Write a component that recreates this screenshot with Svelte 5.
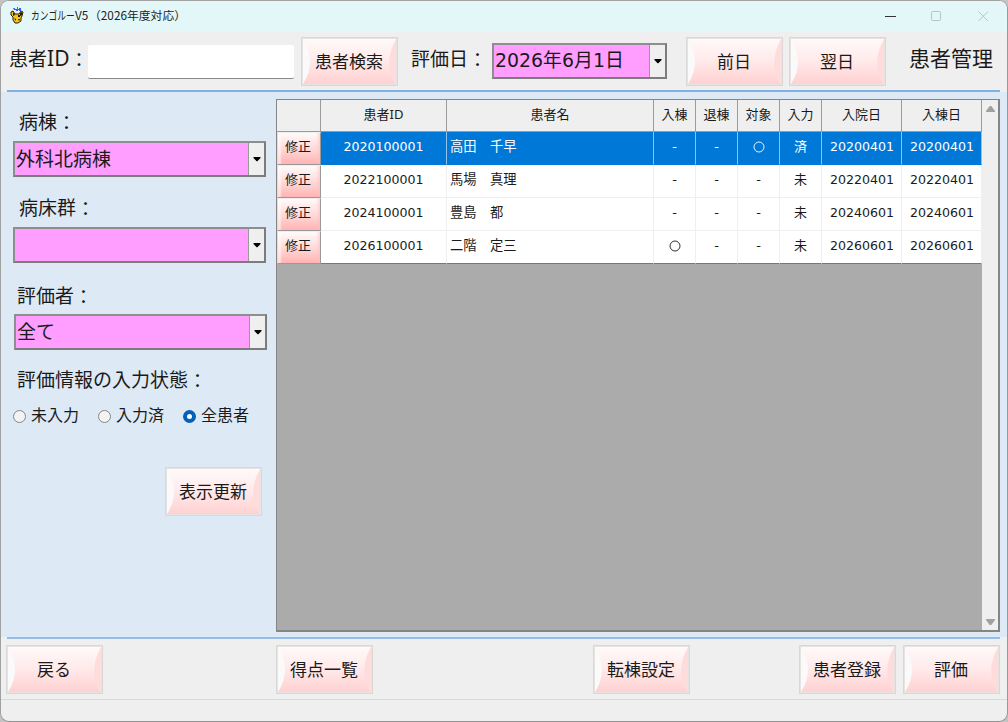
<script>
  const patients = [
    { id: '2020100001', name: '高田　千早', marks: ['-', '-', '○', '済'], admitted: '20200401', ward: '20200401' },
    { id: '2022100001', name: '馬場　真理', marks: ['-', '-', '-', '未'], admitted: '20220401', ward: '20220401' },
    { id: '2024100001', name: '豊島　都', marks: ['-', '-', '-', '未'], admitted: '20240601', ward: '20240601' },
    { id: '2026100001', name: '二階　定三', marks: ['○', '-', '-', '未'], admitted: '20260601', ward: '20260601' }
  ];
  const heads = ['患者名', '入棟', '退棟', '対象', '入力', '入院日', '入棟日'];
  const states = ['未入力', '入力済', '全患者'];
  let status = $state('全患者');
  let selected = $state(0);
</script>

{#snippet button(label)}
  <button class="glass">
    <svg viewBox="0 0 97 49" aria-hidden="true">
      <path d="M2 2Q16 25 2 47Z" fill="#fafafa" />
      <path d="M95 2Q82 25 94 47H95Z" fill="#ffdcdc" />
    </svg>
    <span>{label}</span>
  </button>
{/snippet}

{#snippet combo(value, kind)}
  <div class="combo {kind}">
    <span class="value">{value}</span>
    <span class="drop"><svg width="8" height="5" viewBox="0 0 8 5"><path d="M.5 0H7.5V1L4.4 4.3H3.6L.5 1Z" /></svg></span>
  </div>
{/snippet}

{#snippet colon()}<span class="colon">：</span>{/snippet}

<main>
  <header class="titlebar">
    <svg class="logo" width="14" height="17" viewBox="0 0 14 17">
      <path d="M1 5L3 4L5 7H9L11 4L13 5L12 9L11 11V14L8 16H5L3 13V10L1 8Z" fill="#f7c51e" stroke="#26200d" stroke-width="1" />
      <path d="M3 1H5V2H7V0H8V2H9V1H11V4H9V3H8V4H6V3H4Z" fill="#345dff" />
      <path d="M3 5L5 8L3 9ZM10 6L12 5V8L10 9ZM4 11L6 12V14ZM8 8H10V10H8ZM8 12H10L9 14Z" fill="#171812" />
    </svg>
    <span class="caption"><b class="kana"><b>カンゴルー</b></b><b class="ver">V5</b><b class="year">（2026年度対応）</b></span>
    <svg class="controls" width="106" height="16" viewBox="0 0 106 16">
      <path d="M1 8.5H12" stroke="#333" />
      <rect x="47.5" y="3.5" width="9" height="9" rx="1" fill="none" stroke="#b4c6c7" />
      <path d="M94.5 3.5L104 13M104 3.5L94.5 13" stroke="#b4c6c7" />
    </svg>
  </header>

  <section class="toolbar">
    <label class="pid" for="pid">患者<span class="latin">ID</span>{@render colon()}</label>
    <input id="pid" type="text" />
    {@render button('患者検索')}
    <span class="date-label">評価日{@render colon()}</span>
    {@render combo('2026年6月1日', 'date')}
    <div class="days">
      {@render button('前日')}
      {@render button('翌日')}
    </div>
    <h1>患者管理</h1>
  </section>

  <section class="body">
    <aside>
      <div class="label ward">病棟{@render colon()}</div>
      {@render combo('外科北病棟', '')}
      <div class="label beds">病床群{@render colon()}</div>
      {@render combo('', '')}
      <div class="label rater">評価者{@render colon()}</div>
      {@render combo('全て', 'shifted')}
      <div class="label state">評価情報の入力状態{@render colon()}</div>
      <div class="radios">
        {#each states as s}
          <label><input type="radio" name="state" value={s} bind:group={status} />{s}</label>
        {/each}
      </div>
      <div class="refresh">{@render button('表示更新')}</div>
    </aside>

    <div class="grid">
      <div class="rows">
        <div class="row head">
          <span></span>
          <span>患者<i class="latin">ID</i></span>
          {#each heads as h}<span>{h}</span>{/each}
        </div>
        {#each patients as p, i}
          <div class="row" class:selected={selected === i}>
            <button class="edit" onclick={() => (selected = i)}>修正</button>
            <span class="num">{p.id}</span>
            <span class="name">{p.name}</span>
            {#each p.marks as m}
              <span>{#if m === '○'}<svg width="12" height="12" viewBox="0 0 12 12" role="img" aria-label="○"><circle cx="6" cy="6" r="5" fill="none" stroke="currentColor" stroke-width=".9" /></svg>{:else}{m}{/if}</span>
            {/each}
            <span class="num date">{p.admitted}</span>
            <span class="num date">{p.ward}</span>
          </div>
        {/each}
      </div>
      <div class="scroll">
        <svg width="9" height="6" viewBox="0 0 9 6"><path d="M3.7 0H5.3L9 5V6H0V5Z" /></svg>
        <svg width="9" height="6" viewBox="0 0 9 6"><path d="M3.7 6H5.3L9 1V0H0V1Z" /></svg>
      </div>
    </div>
  </section>

  <footer>
    {@render button('戻る')}
    {@render button('得点一覧')}
    {@render button('転棟設定')}
    {@render button('患者登録')}
    {@render button('評価')}
  </footer>
  <div class="statusbar"></div>
</main>

<style>
  :global(body) { background: #c3c3c3; }
  * { box-sizing: border-box; }
  main {
    width: 1008px; height: 722px; overflow: hidden;
    display: flex; flex-direction: column;
    border: 1px solid #a0a2a2; border-right-color: #999; border-bottom-color: #929292;
    border-radius: 9px; background: #efefef; color: #1a1a1a;
    font-family: "DejaVu Sans", "Noto Sans CJK JP", sans-serif;
    font-size: 19px; line-height: 28px; white-space: nowrap;
  }
  .latin { font-family: "Noto Sans", sans-serif; font-style: normal; }
  .colon { display: inline-block; transform: translateY(1px); }
  .titlebar { flex: none; height: 31px; background: #e4f7f8; display: flex; align-items: center; padding: 0 17px 0 9px; }
  .logo { margin-top: -2px; }
  .caption { margin-left: 7px; margin-top: -3px; font: 11.8px/18px "Noto Sans CJK JP", sans-serif; display: flex; color: #222; }
  .caption b { font-weight: 400; }
  .kana { width: 44px; }
  .kana b { display: inline-block; transform: scaleX(.74); transform-origin: 0 50%; }
  .ver { width: 14px; }
  .controls { margin-left: auto; margin-top: -1px; }

  .toolbar { flex: none; height: 60px; display: flex; align-items: flex-start; margin: 0 7px 0 6px; padding-top: 5px; border-bottom: 2px solid #82b1e0; }
  .pid { width: 81px; padding-left: 2px; margin-top: 8px; }
  .pid .latin { font-size: 21px; line-height: 20px; }
  #pid { width: 206px; height: 34px; margin: 8px 7px 0 0; padding: 0 4px; border: 0; border-bottom: 1px solid #888; background: #fff; border-radius: 2px; font: inherit; outline: 0; }
  .date-label { margin: 8px 0 0 13px; width: 81px; }
  .days { display: flex; gap: 6px; margin-left: 19px; }
  h1 { margin: 7px 0 0 23px; font-weight: 400; font-size: 21px; line-height: 30px; }

  .glass {
    position: relative; flex: none; display: block; width: 97px; height: 49px; padding: 0 1px 2px 0;
    border: 1px solid #d8d8d8; outline: 1px solid #e8e3e3; outline-offset: -2px;
    background: linear-gradient(#fffafa, #ffeaea 48%, #ffd0d0);
    font: 17px/26px "Noto Sans CJK JP", sans-serif; color: #1a1a1a; white-space: nowrap;
  }
  .glass svg { position: absolute; inset: -1px; width: 97px; height: 49px; }
  .glass span { position: relative; }

  .combo { width: 253px; height: 36px; display: flex; border: 2px solid #8a8a8a; border-color: #8e8e8e #7c7c7c #7c7c7c #8e8e8e; background: #ff9eff; }
  .combo .value { flex: 1; padding-left: 1px; font-size: 19px; line-height: 32px; }
  .drop { width: 16px; background: #efefef; border-left: 1px solid #999; display: flex; align-items: center; justify-content: center; }
  .combo.date { width: 175px; margin-top: 6px; }
  .combo.date .value { font-size: 18.9px; line-height: 31px; }
  .shifted { margin-left: 1px; }

  .body { flex: none; height: 545px; display: flex; background: #dde9f5; }
  aside { width: 275px; padding-left: 12px; }
  .label { line-height: 28px; }
  .ward { padding-left: 6px; margin: 16px 0 5px; }
  .beds { padding-left: 6px; margin: 17px 0 5px; }
  .rater { padding-left: 4px; margin: 19px 0 4px; }
  .state { padding-left: 4px; margin-top: 16px; }
  .radios { display: flex; margin-top: 8px; font-size: 16px; line-height: 27px; height: 26px; }
  .radios label { display: flex; width: 85px; flex: none; }
  .radios input { appearance: none; width: 13px; height: 13px; margin: 8px 5px 0 0; border: 1px solid #858585; border-radius: 50%; background: #f3f3f3; }
  .radios input:checked { border: 4px solid #0560b8; background: #fff; }
  .refresh { margin: 39px 0 0 152px; }

  .grid { width: 724px; height: 533px; margin-top: 7px; display: flex; border: 1px solid #858585; border-right-width: 2px; border-bottom-width: 2px; background: #ababab; }
  .rows { width: 705px; }
  .row { display: grid; grid-template-columns: 44px 126px 207px 42px 42px 42px 42px 80px 80px; grid-template-rows: 100%; height: 33px; background: #fff; font-size: 13px; line-height: 29px; text-align: center; }
  .row > span { border-right: 1px solid #efefef; border-bottom: 1px solid #efefef; display: flex; justify-content: center; }
  .row svg { margin-top: 9px; }
  .row.head { height: 32px; background: #efefef; }
  .row.head > span { border-color: #9b9b9b; }
  .row.selected { background: #0078d7; color: #fff; }
  .row.selected > span { border-right-color: #8fc3ec; border-bottom-color: #0078d7; }
  .row:last-child > span { border-bottom-color: #777; }
  .row > .name { justify-content: flex-start; padding-left: 3px; font-size: 13.3px; }
  .row > .num { font-size: 12.6px; }
  .row > .date { padding-left: 1px; }
  .edit { margin: 0; padding: 0 2px 5px 0; border: 1px solid #999; border-top-color: #eee; border-left-color: #ddd; background: linear-gradient(90deg, #fff8 0 2px, #fff0 4px 38px, #fbb8 42px), linear-gradient(#fffafa, #ffdada 50%, #ffb3b3); font: 13px/26px "Noto Sans CJK JP", sans-serif; color: #1a1a1a; }
  .scroll { flex: 1; background: #efefef; display: flex; flex-direction: column; justify-content: space-between; align-items: center; padding: 6px 0 5px; fill: #a0a0a0; }

  footer { flex: none; height: 62px; display: flex; padding: 6px 0 0 5px; background: linear-gradient(#93bde6, #93bde6) 6px 0 / 993px 2px no-repeat; }
  footer :global(.glass) { margin-top: 2px; }
  footer :global(.glass:nth-child(2)) { margin-left: 173px; }
  footer :global(.glass:nth-child(3)) { margin-left: 220px; }
  footer :global(.glass:nth-child(4)) { margin-left: 109px; }
  footer :global(.glass:nth-child(5)) { margin-left: 7px; }
  .statusbar { flex: 1; border-top: 1px solid #d8d8d8; }
</style>
